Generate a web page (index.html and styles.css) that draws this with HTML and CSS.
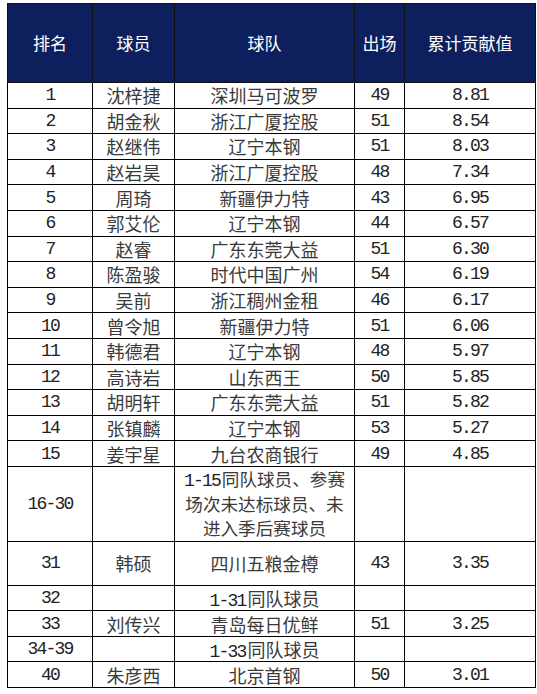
FILE: index.html
```html
<!DOCTYPE html>
<html lang="zh-CN">
<head>
<meta charset="utf-8">
<title>累计贡献值排名</title>
<link rel="stylesheet" href="styles.css">
</head>
<body>
<table class="rank">
  <colgroup>
    <col class="c-rank"><col class="c-player"><col class="c-team"><col class="c-apps"><col class="c-value">
  </colgroup>
  <thead>
    <tr class="head"><th>排名</th><th>球员</th><th>球队</th><th>出场</th><th>累计贡献值</th></tr>
  </thead>
  <tbody>
    <tr class="row"><td class="num">1</td><td>沈梓捷</td><td>深圳马可波罗</td><td class="num">49</td><td class="num">8.81</td></tr>
    <tr class="row"><td class="num">2</td><td>胡金秋</td><td>浙江广厦控股</td><td class="num">51</td><td class="num">8.54</td></tr>
    <tr class="row"><td class="num">3</td><td>赵继伟</td><td>辽宁本钢</td><td class="num">51</td><td class="num">8.03</td></tr>
    <tr class="row"><td class="num">4</td><td>赵岩昊</td><td>浙江广厦控股</td><td class="num">48</td><td class="num">7.34</td></tr>
    <tr class="row"><td class="num">5</td><td>周琦</td><td>新疆伊力特</td><td class="num">43</td><td class="num">6.95</td></tr>
    <tr class="row"><td class="num">6</td><td>郭艾伦</td><td>辽宁本钢</td><td class="num">44</td><td class="num">6.57</td></tr>
    <tr class="row"><td class="num">7</td><td>赵睿</td><td>广东东莞大益</td><td class="num">51</td><td class="num">6.30</td></tr>
    <tr class="row"><td class="num">8</td><td>陈盈骏</td><td>时代中国广州</td><td class="num">54</td><td class="num">6.19</td></tr>
    <tr class="row"><td class="num">9</td><td>吴前</td><td>浙江稠州金租</td><td class="num">46</td><td class="num">6.17</td></tr>
    <tr class="row"><td class="num">10</td><td>曾令旭</td><td>新疆伊力特</td><td class="num">51</td><td class="num">6.06</td></tr>
    <tr class="row"><td class="num">11</td><td>韩德君</td><td>辽宁本钢</td><td class="num">48</td><td class="num">5.97</td></tr>
    <tr class="row"><td class="num">12</td><td>高诗岩</td><td>山东西王</td><td class="num">50</td><td class="num">5.85</td></tr>
    <tr class="row"><td class="num">13</td><td>胡明轩</td><td>广东东莞大益</td><td class="num">51</td><td class="num">5.82</td></tr>
    <tr class="row"><td class="num">14</td><td>张镇麟</td><td>辽宁本钢</td><td class="num">53</td><td class="num">5.27</td></tr>
    <tr class="row"><td class="num">15</td><td>姜宇星</td><td>九台农商银行</td><td class="num">49</td><td class="num">4.85</td></tr>
    <tr class="row-tall"><td class="num">16-30</td><td></td><td class="note"><span class="dig">1-15</span>同队球员、参赛<br>场次未达标球员、未<br>进入季后赛球员</td><td></td><td></td></tr>
    <tr class="row-mid"><td class="num">31</td><td>韩硕</td><td>四川五粮金樽</td><td class="num">43</td><td class="num">3.35</td></tr>
    <tr class="row-end"><td class="num">32</td><td></td><td><span class="dig">1-31</span>同队球员</td><td></td><td></td></tr>
    <tr class="row-end"><td class="num">33</td><td>刘传兴</td><td>青岛每日优鲜</td><td class="num">51</td><td class="num">3.25</td></tr>
    <tr class="row-end"><td class="num">34-39</td><td></td><td><span class="dig">1-33</span>同队球员</td><td></td><td></td></tr>
    <tr class="row-end"><td class="num">40</td><td>朱彦西</td><td>北京首钢</td><td class="num">50</td><td class="num">3.01</td></tr>
  </tbody>
</table>
</body>
</html>
```

FILE: styles.css
```css
html, body {
  margin: 0;
  padding: 0;
  background: #ffffff;
}

body {
  padding: 3px 0 0 7px;
}

.rank {
  border-collapse: collapse;
  table-layout: fixed;
  width: 528px;
  font-family: "Noto Sans CJK SC", "Noto Sans", sans-serif;
  color: #3a3a3a;
}

.c-rank { width: 85px; }
.c-player { width: 82px; }
.c-team { width: 180px; }
.c-apps { width: 50px; }
.c-value { width: 131px; }

.rank th,
.rank td {
  border: 1px solid #000000;
  text-align: center;
  vertical-align: middle;
  padding: 0 4px;
  font-size: 18px;
  line-height: 18px;
  font-weight: 400;
  overflow: hidden;
  white-space: nowrap;
}

.rank th {
  background: #0d1f5c;
  color: #ffffff;
  font-size: 17px;
  border-color: #111111;
}

.head { height: 79px; }
.row { height: 25.6px; }
.row-tall { height: 75px; }
.row-mid { height: 44px; }
.row-end { height: 25.5px; }

.rank td.note {
  font-size: 17.6px;
  line-height: 24.5px;
  padding: 0 3px;
}

.num,
.dig {
  font-family: "Liberation Mono", monospace;
  letter-spacing: -1.8px;
  color: #222222;
}

.dig {
  font-size: 18px;
  line-height: 0;
  margin-right: 1.8px;
}

.rank td.num {
  font-size: 18px;
}
```
